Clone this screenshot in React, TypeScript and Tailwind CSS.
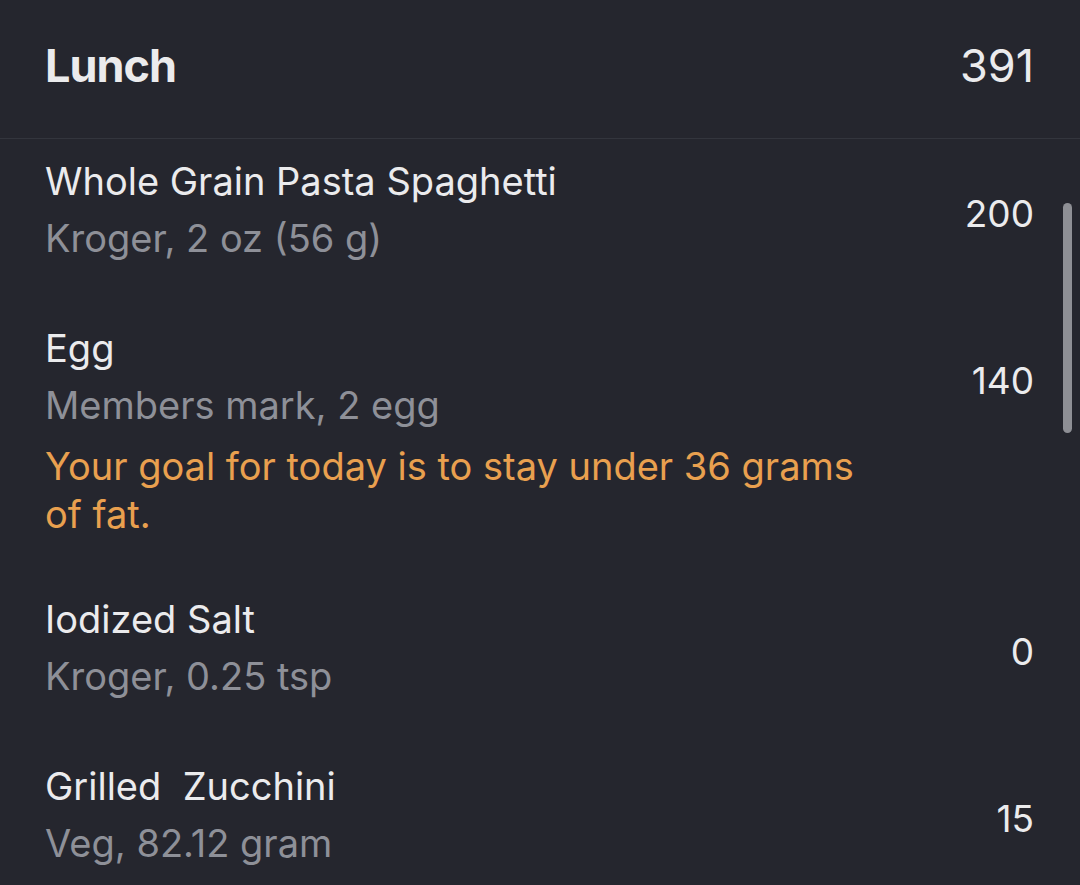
import React from "react";

type Item = { name: string; detail: string; cal: string; note?: string };

const items: Item[] = [
  { name: "Whole Grain Pasta Spaghetti", detail: "Kroger, 2 oz (56 g)", cal: "200" },
  {
    name: "Egg",
    detail: "Members mark, 2 egg",
    cal: "140",
    note: "Your goal for today is to stay under 36 grams of fat.",
  },
  { name: "Iodized Salt", detail: "Kroger, 0.25 tsp", cal: "0" },
  { name: "Grilled\u00a0 Zucchini", detail: "Veg, 82.12 gram", cal: "15" },
];

export default function App() {
  return (
    <div
      className="relative w-[1080px] h-[885px] overflow-hidden bg-[#25262e] text-[#ebebed]"
      style={{ fontFamily: "Inter, 'Noto Sans', 'Liberation Sans', sans-serif" }}
    >
      <div className="flex items-center justify-between h-[139px] pl-[45px] pr-[46px] pb-[6px] border-b border-[#33353d]">
        <span className="text-[45px] font-bold tracking-[-1px] leading-[56px]">Lunch</span>
        <span className="text-[45px] leading-[56px]">391</span>
      </div>
      <div className="flex flex-col gap-[53px] pt-[14px] pl-[45px] pr-[46px]">
        {items.map((it) => (
          <div key={it.cal} className="flex flex-col">
            <div className="flex items-center justify-between">
              <div className="flex flex-col">
                <span className="text-[38px] leading-[57px] text-[#ebebed]">{it.name}</span>
                <span className="text-[38px] leading-[57px] text-[#8e9098]">{it.detail}</span>
              </div>
              <span className="text-[37px] leading-[57px] pt-[6px] text-[#ebebed]">{it.cal}</span>
            </div>
            {it.note && (
              <p className="w-[830px] text-[38px] leading-[48px] mt-[8px] text-[#e9a04f]">{it.note}</p>
            )}
          </div>
        ))}
      </div>
      <div className="absolute left-[1063px] top-[203px] w-[9px] h-[230px] rounded-full bg-[#8e8f95]" />
    </div>
  );
}
